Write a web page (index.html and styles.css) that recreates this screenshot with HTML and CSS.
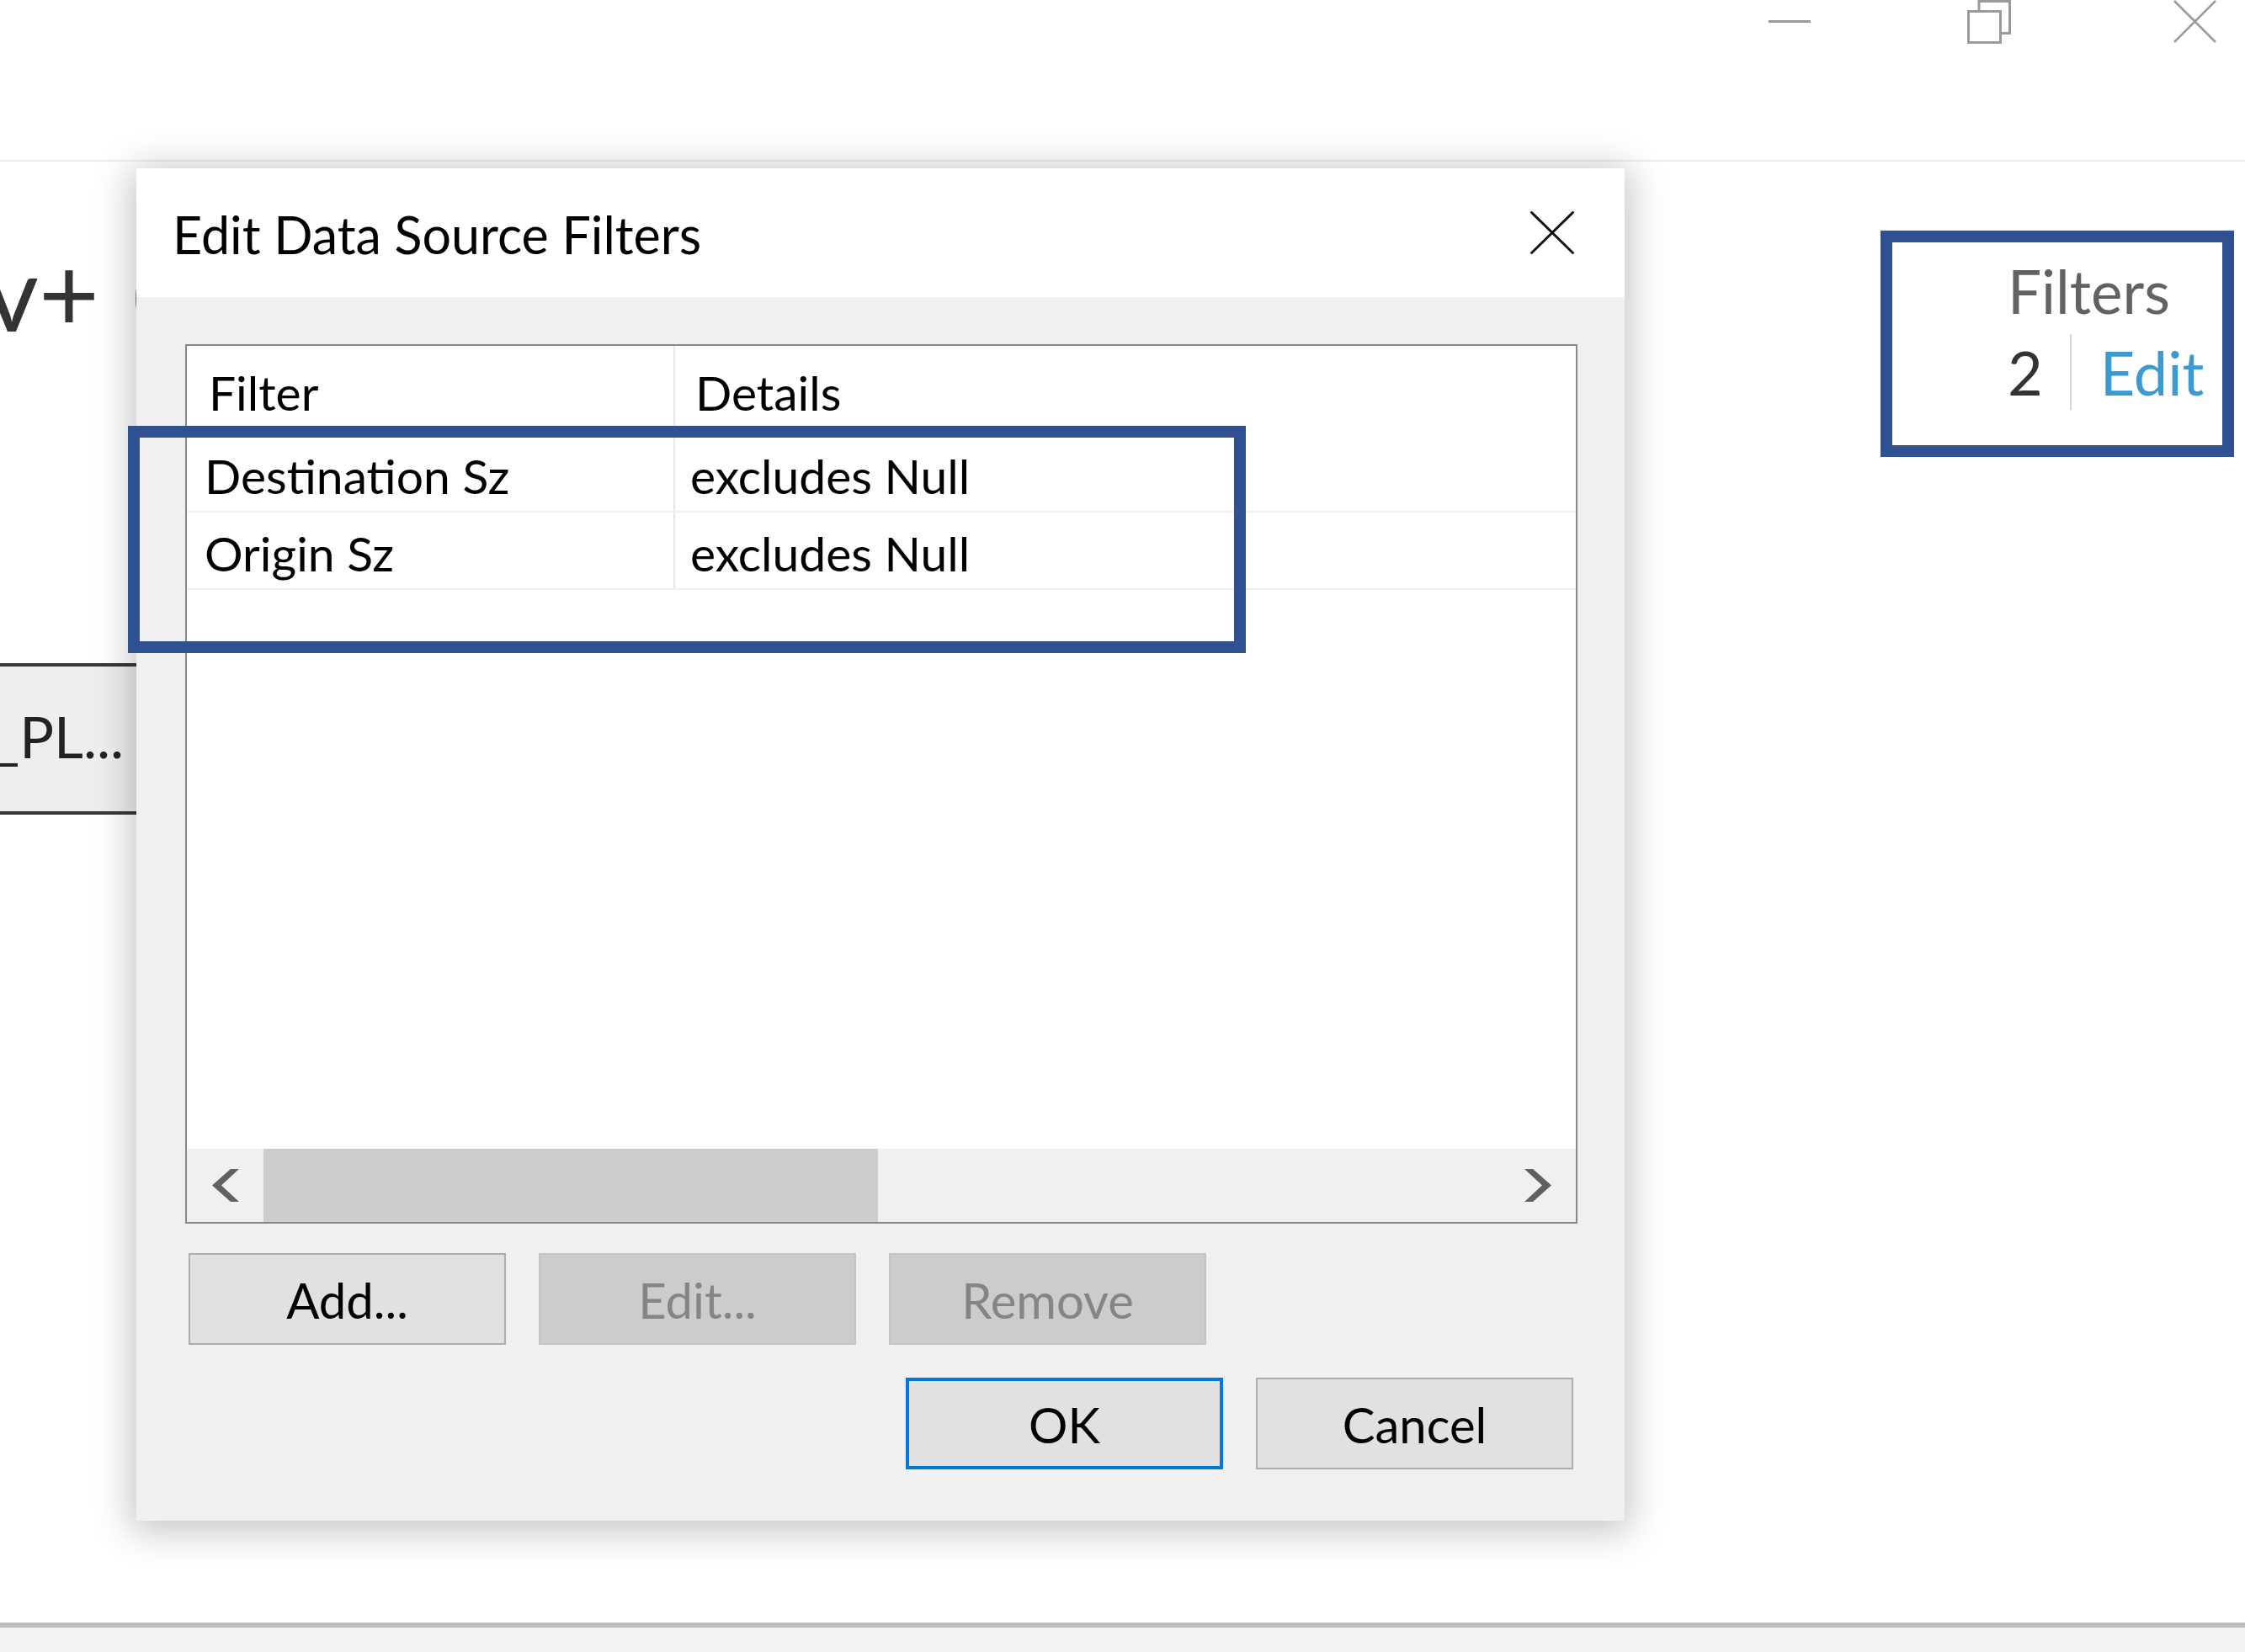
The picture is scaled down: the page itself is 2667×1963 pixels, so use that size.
FILE: index.html
```html
<!DOCTYPE html>
<html lang="en">
<head>
<meta charset="utf-8">
<title>Edit Data Source Filters</title>
<link rel="stylesheet" href="styles.css">
</head>
<body>
<div class="app">
  <header class="topbar">
    <svg class="wc wc-min" width="52" height="52" viewBox="0 0 52 52"><line x1="1" y1="25.5" x2="51" y2="25.5"/></svg>
    <svg class="wc wc-restore" width="53" height="52" viewBox="0 0 53 52"><rect x="1.5" y="13.5" width="38" height="37"/><path d="M14 13.5 V1.5 H50.5 V39.5 H39.5"/></svg>
    <svg class="wc wc-close" width="51" height="51" viewBox="0 0 51 51"><line x1="1" y1="1" x2="50" y2="50"/><line x1="1" y1="50" x2="50" y2="1"/></svg>
  </header>
  <main class="workspace">
    <div class="ds-area">
      <div class="ds-title">v+ (</div>
      <div class="ds-tab">_PL...</div>
    </div>
    <aside class="filters-panel">
      <div class="filters-label">Filters</div>
      <div class="filters-row">
        <span class="filters-count">2</span>
        <span class="filters-sep"></span>
        <span class="filters-edit">Edit</span>
      </div>
    </aside>
  </main>
  <footer class="statusbar"></footer>
</div>

<div class="dialog">
  <div class="dlg-titlebar">
    <span class="dlg-title">Edit Data Source Filters</span>
    <svg class="dlg-close" width="52" height="51" viewBox="0 0 52 51"><line x1="1.5" y1="1.5" x2="50.5" y2="49.5"/><line x1="1.5" y1="49.5" x2="50.5" y2="1.5"/></svg>
  </div>
  <div class="dlg-body">
    <div class="listview">
      <div class="lv-row lv-header">
        <div class="lv-cell c1">Filter</div>
        <div class="lv-cell c2">Details</div>
      </div>
      <div class="lv-row lv-item">
        <div class="lv-cell c1">Destination Sz</div>
        <div class="lv-cell c2">excludes Null</div>
      </div>
      <div class="lv-row lv-item">
        <div class="lv-cell c1">Origin Sz</div>
        <div class="lv-cell c2">excludes Null</div>
      </div>
      <div class="lv-empty"></div>
      <div class="hscroll">
        <div class="hs-btn hs-left"><svg width="32" height="39" viewBox="0 0 32 39"><polygon points="22,0 32,0 11,19.5 32,39 22,39 0,19.5"/></svg></div>
        <div class="hs-track"><div class="hs-thumb"></div></div>
        <div class="hs-btn hs-right"><svg width="32" height="39" viewBox="0 0 32 39"><polygon points="10,0 0,0 21,19.5 0,39 10,39 32,19.5"/></svg></div>
      </div>
    </div>
    <div class="btn-row">
      <button class="btn">Add...</button>
      <button class="btn" disabled>Edit...</button>
      <button class="btn" disabled>Remove</button>
    </div>
    <div class="btn-row btn-row-end">
      <button class="btn btn-default">OK</button>
      <button class="btn">Cancel</button>
    </div>
  </div>
</div>

<div class="annot annot-rows"></div>
<div class="annot annot-filters"></div>
</body>
</html>
```

FILE: styles.css
```css
* { box-sizing: border-box; }

html, body {
  margin: 0;
  padding: 0;
}

body {
  width: 2667px;
  height: 1963px;
  overflow: hidden;
  position: relative;
  background: #ffffff;
  font-family: Lato, "Open Sans", sans-serif;
  color: #000;
}

.app {
  display: flex;
  flex-direction: column;
  height: 1963px;
}

/* ---------- top bar ---------- */
.topbar {
  flex: none;
  height: 192px;
  border-bottom: 2px solid #ececec;
  display: flex;
  justify-content: flex-end;
  align-items: flex-start;
  padding-right: 34px;
}

.wc {
  display: block;
  fill: none;
  stroke: #9a9a9a;
  stroke-width: 3;
}
.wc-min { margin-right: 185px; }
.wc-restore { margin-right: 192px; }
.wc-close { stroke-width: 2.5; }

/* ---------- workspace ---------- */
.workspace {
  flex: 1;
  display: flex;
  min-height: 0;
}

.ds-area {
  flex: 1;
  padding-top: 92px;
  overflow: hidden;
}

.ds-title {
  font-size: 124px;
  line-height: 124px;
  color: #333333;
  margin-left: -18px;
  word-spacing: 6px;
  white-space: nowrap;
}

.ds-tab {
  margin-top: 380px;
  margin-left: -8px;
  width: 230px;
  height: 180px;
  border-top: 4px solid #383838;
  border-bottom: 4px solid #383838;
  background: #eeeeee;
  display: flex;
  align-items: center;
  padding-bottom: 6px;
  font-size: 68px;
  line-height: 68px;
  color: #222222;
  white-space: nowrap;
}

.filters-panel {
  flex: none;
  width: 282px;
  padding-top: 118px;
}

.filters-label {
  font-size: 71px;
  line-height: 72px;
  color: #626262;
}

.filters-row {
  margin-top: 24px;
  height: 72px;
  display: flex;
  align-items: center;
}

.filters-count {
  font-size: 72px;
  line-height: 72px;
  color: #333333;
}

.filters-sep {
  width: 2px;
  height: 90px;
  background: #d6d6d6;
  margin-left: 32px;
}

.filters-edit {
  margin-left: 34px;
  font-size: 72px;
  line-height: 72px;
  color: #3b9ad0;
}

.statusbar {
  flex: none;
  height: 35px;
  border-top: 6px solid #bcbcbc;
  background: #f3f3f3;
}

/* ---------- dialog ---------- */
.dialog {
  position: absolute;
  left: 162px;
  top: 200px;
  width: 1768px;
  height: 1607px;
  background: #f0f0f0;
  box-shadow: 0 6px 42px 6px rgba(0, 0, 0, 0.24);
  display: flex;
  flex-direction: column;
  z-index: 5;
}

.dlg-titlebar {
  flex: none;
  height: 153px;
  background: #ffffff;
  display: flex;
  align-items: center;
  justify-content: space-between;
  padding: 0 60px 0 43px;
}

.dlg-title {
  font-size: 61px;
  line-height: 62px;
  padding-top: 4px;
  color: #000;
  white-space: nowrap;
}

.dlg-close {
  display: block;
  fill: none;
  stroke: #111111;
  stroke-width: 3;
  stroke-linecap: round;
}

.dlg-body {
  flex: 1;
  display: flex;
  flex-direction: column;
  padding: 56px 56px 62px 58px;
}

/* list view */
.listview {
  flex: none;
  height: 1045px;
  border: 2px solid #848991;
  background: #ffffff;
  display: flex;
  flex-direction: column;
}

.lv-row {
  flex: none;
  display: flex;
  font-size: 57px;
  line-height: 58px;
  color: #000;
}

.lv-header { height: 106px; }

.lv-item {
  height: 92px;
  border-bottom: 2px solid #efefef;
}

.lv-cell {
  display: flex;
  align-items: center;
  white-space: nowrap;
}

.c1 {
  width: 580px;
  border-right: 2px solid #e6e6e6;
}
.c2 { flex: 1; }

.lv-header .c1 { padding-left: 26px; padding-top: 4px; }
.lv-header .c2 { padding-left: 24px; padding-top: 4px; }
.lv-item .c1 { padding-left: 21px; padding-top: 6px; }
.lv-item .c2 { padding-left: 18px; padding-top: 6px; }

.lv-empty { flex: 1; }

.hscroll {
  flex: none;
  height: 87px;
  display: flex;
  background: #f0f0f0;
}

.hs-btn {
  flex: none;
  width: 91px;
  display: flex;
  align-items: center;
  justify-content: center;
}
.hs-btn svg { display: block; fill: #606060; }

.hs-track {
  flex: 1;
  display: flex;
}

.hs-thumb {
  width: 730px;
  background: #cdcdcd;
}

/* buttons */
.btn-row {
  flex: none;
  display: flex;
  gap: 39px;
  margin-top: 35px;
  margin-left: 4px;
}

.btn-row-end {
  margin-top: 39px;
  justify-content: flex-end;
  margin-right: 5px;
}

.btn {
  width: 377px;
  height: 109px;
  margin: 0;
  padding: 2px 0 0 0;
  background: #e1e1e1;
  border: 2px solid #adadad;
  border-radius: 0;
  font-family: Lato, "Open Sans", sans-serif;
  font-size: 58px;
  line-height: 58px;
  color: #000;
}

.btn:disabled {
  background: #cccccc;
  border-color: #c4c4c4;
  color: #858585;
}

.btn-default {
  border: 4px solid #0078d7;
}

/* ---------- annotation frames ---------- */
.annot {
  position: absolute;
  border: 14px solid #2f5190;
  z-index: 10;
}

.annot-rows {
  left: 152px;
  top: 506px;
  width: 1328px;
  height: 270px;
}

.annot-filters {
  left: 2234px;
  top: 274px;
  width: 420px;
  height: 269px;
}
```
